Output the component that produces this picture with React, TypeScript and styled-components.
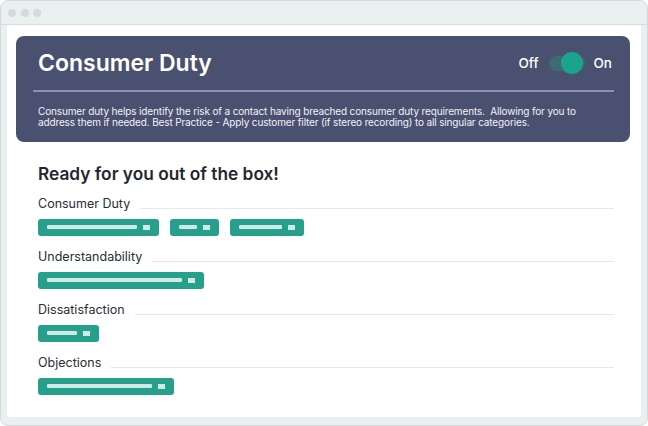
import * as React from "react"
import styled, { createGlobalStyle } from "styled-components"

const GlobalStyle = createGlobalStyle`
  body {
    margin: 0;
    font-family: Inter, "Noto Sans", sans-serif;
    background: #ffffff;
  }
`

const Window = styled.div`
  width: 648px;
  height: 426px;
  box-sizing: border-box;
  display: flex;
  flex-direction: column;
  background: #eaeff0;
  border: 1px solid #d3d9dc;
  border-radius: 8px;
  overflow: hidden;
`

const TitleBar = styled.div`
  height: 24px;
  box-sizing: border-box;
  display: flex;
  align-items: center;
  gap: 4.5px;
  padding-left: 7px;
  border-bottom: 1px solid #d6dcdf;
  flex-shrink: 0;
`

const Dot = styled.span`
  width: 8px;
  height: 8px;
  border-radius: 50%;
  background: #d4dadf;
`

const Content = styled.div`
  flex: 1;
  margin: 0 6px 8px 6px;
  padding: 11px 11px 0 9px;
  background: #ffffff;
  border-radius: 0 0 4px 4px;
`

const Card = styled.section`
  background: #4a5170;
  border-radius: 8px;
  color: #ffffff;
`

const CardHeader = styled.div`
  height: 54px;
  display: flex;
  align-items: center;
  justify-content: space-between;
  padding: 0 18px 0 22px;
`

const Title = styled.h1`
  margin: 0;
  font-size: 23px;
  font-weight: 600;
`

const ToggleWrap = styled.div`
  display: flex;
  align-items: center;
  font-size: 13.5px;
  font-weight: 500;
`

const Track = styled.div`
  position: relative;
  width: 36px;
  height: 15px;
  margin: 0 9px 0 10px;
  border-radius: 8px;
  background: #3c6b73;
`

const Knob = styled.span`
  position: absolute;
  right: 2px;
  top: 50%;
  width: 22px;
  height: 22px;
  margin-top: -11px;
  border-radius: 50%;
  background: #1ba48d;
`

const Rule = styled.div`
  height: 1.5px;
  margin: 0 16px 0 17px;
  background: #8b91ae;
`

const Description = styled.p`
  margin: 0;
  padding: 14px 10px 14px 22px;
  font-size: 10px;
  line-height: 11px;
  letter-spacing: -0.14px;
  white-space: nowrap;
  color: #f1f2f6;
`

const Section = styled.div`
  padding: 0 16px 0 22px;
`

const Heading = styled.h2`
  margin: 20px 0 10px;
  font-size: 17.3px;
  line-height: 24px;
  font-weight: 600;
  color: #23262f;
`

const Category = styled.div`
  margin-bottom: 13px;
`

const LabelRow = styled.div`
  display: flex;
  align-items: center;
  gap: 10px;
  height: 16px;
`

const Label = styled.span`
  font-size: 12.5px;
  color: #2a2d36;
  white-space: nowrap;
`

const LabelLine = styled.span`
  flex: 1;
  height: 1px;
  margin-top: 9px;
  background: #e6e8eb;
`

const Pills = styled.div`
  display: flex;
  gap: 11px;
  margin-top: 7px;
`

const Pill = styled.div`
  display: inline-flex;
  align-items: center;
  gap: 6px;
  height: 17px;
  padding: 0 9px;
  border-radius: 3px;
  background: #26a08d;
`

const Bar = styled.span<{ $w: number }>`
  width: ${(p) => p.$w}px;
  height: 4px;
  border-radius: 1px;
  background: #cfe9e5;
`

const Square = styled.span`
  width: 7px;
  height: 5px;
  background: #cfe9e5;
`

const categories = [
  { name: "Consumer Duty", bars: [90, 18, 43] },
  { name: "Understandability", bars: [135] },
  { name: "Dissatisfaction", bars: [30] },
  { name: "Objections", bars: [105] },
]

const App = () => (
  <>
    <GlobalStyle />
    <Window>
      <TitleBar>
        <Dot />
        <Dot />
        <Dot />
      </TitleBar>
      <Content>
        <Card>
          <CardHeader>
            <Title>Consumer Duty</Title>
            <ToggleWrap>
              <span>Off</span>
              <Track>
                <Knob />
              </Track>
              <span>On</span>
            </ToggleWrap>
          </CardHeader>
          <Rule />
          <Description>
            Consumer duty helps identify the risk of a contact having breached
            consumer duty requirements.&nbsp; Allowing for you to
            <br />
            address them if needed. Best Practice - Apply customer filter (if
            stereo recording) to all singular categories.
          </Description>
        </Card>
        <Section>
          <Heading>Ready for you out of the box!</Heading>
          {categories.map((c) => (
            <Category key={c.name}>
              <LabelRow>
                <Label>{c.name}</Label>
                <LabelLine />
              </LabelRow>
              <Pills>
                {c.bars.map((w, i) => (
                  <Pill key={i}>
                    <Bar $w={w} />
                    <Square />
                  </Pill>
                ))}
              </Pills>
            </Category>
          ))}
        </Section>
      </Content>
    </Window>
  </>
)

export default App
